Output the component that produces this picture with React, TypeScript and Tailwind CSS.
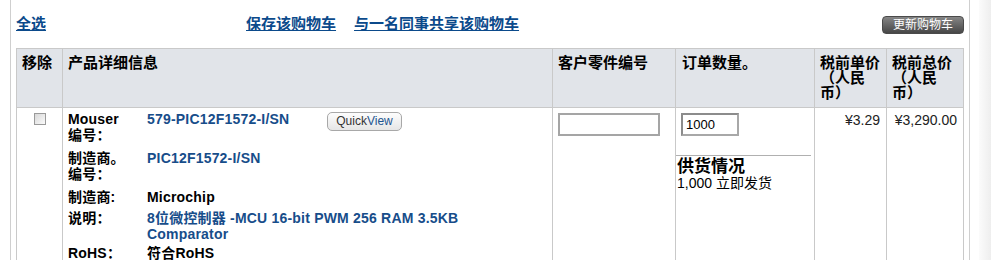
const cols = 'grid grid-cols-[46px_490px_123px_139px_72px_77px]'
const font = 'font-["Liberation_Sans","Noto_Sans_CJK_SC",sans-serif]'

function HeaderCell({ children }: { children: React.ReactNode }) {
  return (
    <div className="border-l border-[#c9c9c9] px-[5px] pt-[6px] text-[15px] leading-[15px] font-bold text-black">
      {children}
    </div>
  )
}

export default function App() {
  return (
    <div className={`${font} h-[260px] w-[991px] overflow-hidden bg-white flex`}>
      {/* main box with side rules */}
      <div className="ml-[10px] w-[960px] shrink-0 border-l border-r border-[#cfcfcf] px-[5px]">
        {/* top actions */}
        <div className="h-[48px] pt-[15px] flex items-start">
          <a href="#" className="text-[15px] leading-[18px] font-bold text-[#0b4a8b] underline">全选</a>
          <a href="#" className="ml-[200px] text-[15px] leading-[18px] font-bold text-[#0b4a8b] underline">保存该购物车</a>
          <a href="#" className="ml-[18px] text-[15px] leading-[18px] font-bold text-[#0b4a8b] underline">与一名同事共享该购物车</a>
          <button className="ml-auto mt-[1px] h-[18px] w-[82px] rounded-[4px] border border-[#4a4a4a] bg-gradient-to-b from-[#868686] to-[#474747] text-[12px] leading-[16px] text-white">
            更新购物车
          </button>
        </div>

        {/* header row */}
        <div className={`${cols} h-[60px] border-t border-b border-r border-[#c9c9c9] bg-[#e1e4e9]`}>
          <HeaderCell>移除</HeaderCell>
          <HeaderCell>产品详细信息</HeaderCell>
          <HeaderCell>客户零件编号</HeaderCell>
          <HeaderCell><span className="pl-px">订单数量。</span></HeaderCell>
          <HeaderCell>税前单价（人民币）</HeaderCell>
          <HeaderCell>税前总价（人民币）</HeaderCell>
        </div>

        {/* product row */}
        <div className={`${cols} h-[200px] border-r border-[#c9c9c9]`}>
          <div className="border-l border-[#c9c9c9] flex justify-center pt-[5px]">
            <div className="h-[12px] w-[12px] border border-[#9a9a9a] bg-gradient-to-br from-[#d8d8d8] to-[#fbfbfb]" />
          </div>

          <div className="border-l border-[#c9c9c9] pl-[5px] pt-[3px]">
            <div className="grid grid-cols-[79px_333px] gap-y-[5px] text-[14px] leading-[16px] font-bold tracking-[0.2px] text-black">
              <div className="mb-[2px]">Mouser<br />编号：</div>
              <div className="flex items-start">
                <span className="w-[180px] text-[#174d8a]">579-PIC12F1572-I/SN</span>
                <button className="mt-[1px] h-[19px] w-[75px] rounded-[5px] border border-[#a8a8a8] bg-gradient-to-b from-[#fdfdfd] to-[#e6e6e6] text-[12px] leading-[17px] font-normal tracking-normal">
                  <span className="text-[#333]">Quick</span><span className="text-[#1d5590]">View</span>
                </button>
              </div>

              <div className="mb-[2px]">制造商。<br />编号：</div>
              <div className="text-[#174d8a]">PIC12F1572-I/SN</div>

              <div>制造商:</div>
              <div>Microchip</div>

              <div>说明：</div>
              <div className="text-[#174d8a]">8位微控制器 -MCU 16-bit PWM 256 RAM 3.5KB Comparator</div>

              <div className="-mt-[2px]">RoHS：</div>
              <div className="-mt-[2px]">符合RoHS</div>
            </div>
          </div>

          <div className="border-l border-[#c9c9c9] pl-[5px] pt-[5px]">
            <input
              type="text"
              className="block h-[23px] w-[102px] border-2 border-[#a5a5a5] bg-white outline-none"
            />
          </div>

          <div className="border-l border-[#c9c9c9] pt-[5px]">
            <div className="pl-[5px]">
              <input
                type="text"
                defaultValue="1000"
                className="block h-[23px] w-[58px] border-2 border-[#a8a8a8] border-t-[#8c8c8c] border-l-[#8c8c8c] bg-white px-[3px] text-[13px] text-black outline-none"
              />
            </div>
            <div className="mt-[19px] mr-[3px] border-t border-[#b0b0b0]" />
            <div className="pl-px pt-[2px] text-[17px] leading-[17px] font-bold text-black">供货情况</div>
            <div className="pl-px text-[14px] leading-[16px] text-black">1,000 立即发货</div>
          </div>

          <div className="border-l border-[#c9c9c9] pr-[6px] pt-[4px] text-right text-[14px] leading-[16px] text-[#222]">
            ¥3.29
          </div>
          <div className="border-l border-[#c9c9c9] pr-[6px] pt-[4px] text-right text-[14px] leading-[16px] text-[#222]">
            ¥3,290.00
          </div>
        </div>
      </div>

      {/* right scroll gutter */}
      <div className="ml-[9px] w-[12px] shrink-0 bg-gradient-to-r from-[#fbfbfb] to-[#eeeeee]" />
    </div>
  )
}
